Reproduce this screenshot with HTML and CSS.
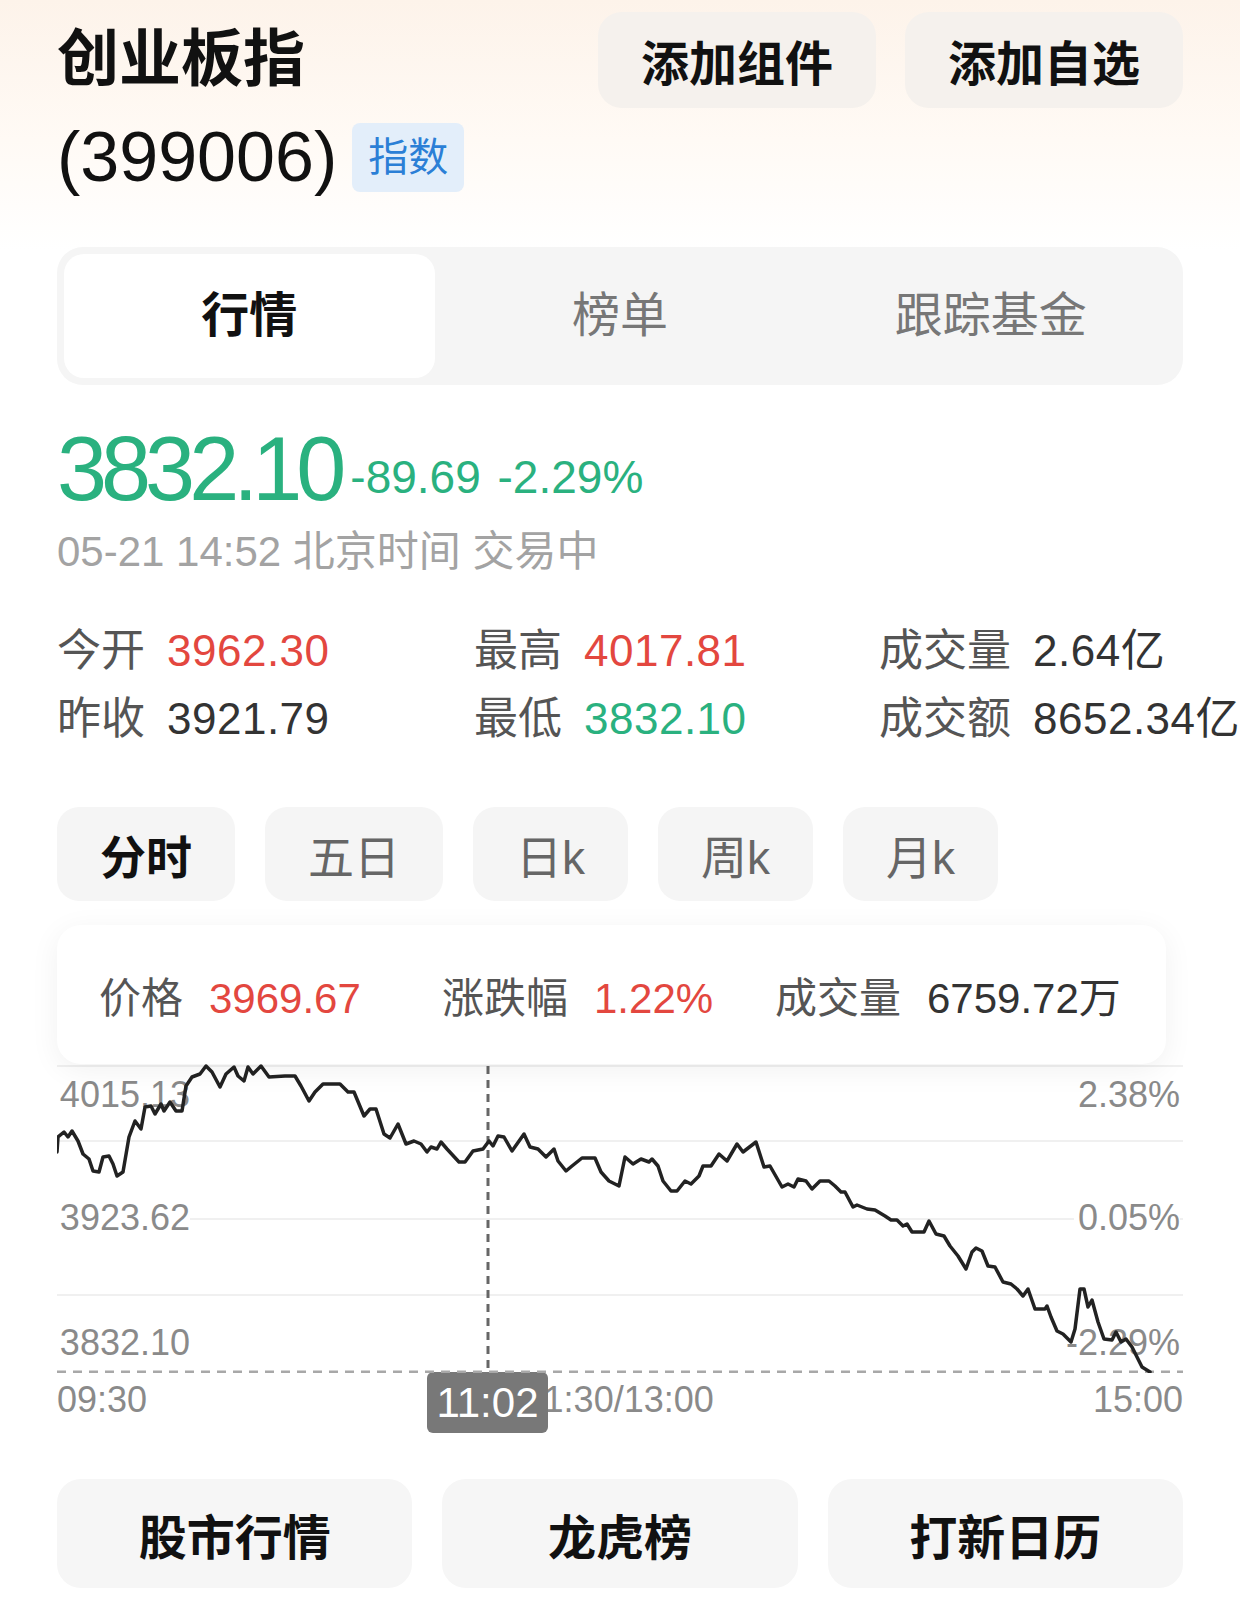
FILE: index.html
```html
<!DOCTYPE html>
<html lang="zh-CN">
<head>
    <meta charset="UTF-8">
    <meta name="viewport" content="width=device-width, initial-scale=1.0">
    <title>创业板指 - 行情</title>
    <link rel="stylesheet" href="styles.css">
</head>
<body>
    <div class="page">
        <header class="top">
            <div class="title-block">
                <h1 class="name">创业板指</h1>
                <div class="code-row">
                    <span class="code">(399006)</span>
                    <span class="tag">指数</span>
                </div>
            </div>
            <div class="top-actions">
                <button class="action-btn">添加组件</button>
                <button class="action-btn">添加自选</button>
            </div>
        </header>

        <nav class="tabs">
            <div class="tab active">行情</div>
            <div class="tab">榜单</div>
            <div class="tab">跟踪基金</div>
        </nav>

        <section class="quote">
            <div class="price-row">
                <span class="last">3832.10</span>
                <span class="change">-89.69 -2.29%</span>
            </div>
            <div class="time">05-21 14:52 北京时间 交易中</div>
        </section>

        <section class="stats">
            <div class="stat"><span class="label">今开</span><span class="up">3962.30</span></div>
            <div class="stat"><span class="label">最高</span><span class="up">4017.81</span></div>
            <div class="stat"><span class="label">成交量</span><span class="plain">2.64亿</span></div>
            <div class="stat"><span class="label">昨收</span><span class="plain">3921.79</span></div>
            <div class="stat"><span class="label">最低</span><span class="down">3832.10</span></div>
            <div class="stat"><span class="label">成交额</span><span class="plain">8652.34亿</span></div>
        </section>

        <div class="periods">
            <div class="period wide active">分时</div>
            <div class="period wide">五日</div>
            <div class="period">日k</div>
            <div class="period">周k</div>
            <div class="period">月k</div>
        </div>

        <div class="info-card">
            <div class="info"><span class="label">价格</span><span class="up">3969.67</span></div>
            <div class="info"><span class="label">涨跌幅</span><span class="up">1.22%</span></div>
            <div class="info"><span class="label">成交量</span><span class="plain">6759.72万</span></div>
        </div>

        <div class="chart">
            <span class="axis-l top-l">4015.13</span>
            <span class="axis-l mid-l">3923.62</span>
            <span class="axis-l bot-l">3832.10</span>
            <span class="axis-r top-l">2.38%</span>
            <span class="axis-r mid-l">0.05%</span>
            <span class="axis-r bot-l">-2.29%</span>
            <svg class="chart-svg" width="1126" height="310" viewBox="0 0 1126 310">
                <line x1="0" y1="309" x2="1126" y2="309" class="base"/>
                <line x1="431" y1="3" x2="431" y2="309" class="cursor"/>
                <polyline class="price-line" points="0,89 1,74 7,69 11,74 15,68 21,78 26,91 32,96 36,108 42,109 46,94 52,93 56,101 60,113 66,109 72,74 78,58 84,66 88,44 94,43 98,51 104,41 107,48 113,39 119,48 125,48 129,23 135,14 143,11 149,3 155,9 163,24 169,11 177,4 181,13 187,18 191,4 196,11 204,3 212,14 228,13 238,13 244,23 252,38 258,29 266,21 283,21 291,29 297,29 307,53 313,46 319,46 327,71 333,75 341,61 349,81 357,78 364,81 370,89 374,84 380,86 384,79 390,86 402,99 408,99 416,88 426,86 432,78 436,83 441,73 447,74 455,88 467,71 473,84 481,86 489,94 497,86 501,98 509,108 515,103 525,95 538,95 544,109 552,118 562,123 568,94 576,101 584,96 592,99 595,96 601,103 606,118 614,128 620,128 628,118 634,121 642,113 646,103 654,103 662,91 670,98 680,81 686,89 699,79 707,104 713,103 725,124 731,121 737,124 741,116 749,118 755,126 763,118 772,118 778,123 784,129 788,129 796,144 800,142 810,146 818,147 828,153 834,157 840,157 846,163 850,161 855,169 863,169 867,169 872,158 879,171 887,173 893,183 901,193 909,206 915,189 919,185 925,188 931,203 938,204 946,219 954,221 960,226 966,233 971,226 978,246 988,246 990,243 994,254 1000,268 1006,271 1014,279 1018,266 1023,226 1027,226 1031,244 1035,237 1041,259 1047,276 1055,277 1059,269 1064,279 1069,276 1075,284 1085,304 1093,309"/>
            </svg>
        </div>

        <div class="xaxis">
            <span>09:30</span>
            <span>11:30/13:00</span>
            <span>15:00</span>
            <span class="cursor-time">11:02</span>
        </div>

        <div class="shortcuts">
            <div class="shortcut">股市行情</div>
            <div class="shortcut">龙虎榜</div>
            <div class="shortcut">打新日历</div>
        </div>
    </div>
</body>
</html>
```

FILE: styles.css
```css
body {
    margin: 0;
    width: 1240px;
    min-height: 1614px;
    overflow: hidden;
    font-family: "Liberation Sans", "Noto Sans CJK SC", sans-serif;
    color: #111;
    background: linear-gradient(180deg, #fdf3ea 0, #fffaf5 140px, #fff 250px) no-repeat;
    background-color: #fff;
}

.page {
    padding: 12px 57px 0;
}

/* header */
.top {
    display: flex;
    justify-content: space-between;
    align-items: flex-start;
}

.name {
    margin: 0;
    font-size: 62px;
    font-weight: 700;
    line-height: 96px;
}

.code-row {
    display: flex;
    align-items: center;
    gap: 15px;
    margin-top: 15px;
    height: 69px;
}

.code {
    font-size: 70px;
    line-height: 69px;
}

.tag {
    font-size: 40px;
    line-height: 69px;
    padding: 0 16px;
    border-radius: 8px;
    color: #2b7fd6;
    background: #e3eefa;
}

.top-actions {
    display: flex;
    gap: 29px;
}

.action-btn {
    width: 278px;
    height: 96px;
    border: none;
    border-radius: 24px;
    background: #f5f1ed;
    font-family: inherit;
    font-size: 48px;
    font-weight: 700;
    color: #111;
}

/* tabs */
.tabs {
    display: grid;
    grid-template-columns: repeat(3, 1fr);
    margin-top: 55px;
    padding: 7px;
    border-radius: 26px;
    background: #f5f5f5;
}

.tab {
    height: 124px;
    line-height: 124px;
    text-align: center;
    font-size: 48px;
    color: #777;
}

.tab.active {
    background: #fff;
    border-radius: 20px;
    color: #111;
    font-weight: 700;
}

/* quote */
.price-row {
    display: flex;
    align-items: center;
    gap: 10px;
    margin-top: 39px;
    color: #2ab17f;
}

.last {
    font-size: 90px;
    line-height: 90px;
    letter-spacing: -6px;
}

.change {
    font-size: 46px;
    line-height: 46px;
    margin-top: 16px;
    word-spacing: 4px;
}

.time {
    margin-top: 10px;
    font-size: 42px;
    line-height: 56px;
    color: #a3a3a3;
}

/* stats */
.stats {
    display: grid;
    grid-template-columns: 417px 405px 1fr;
    margin-top: 37px;
    font-size: 44px;
    line-height: 68px;
}

.stat, .info {
    display: flex;
    align-items: baseline;
    gap: 22px;
    white-space: nowrap;
}

.stat .up, .stat .down, .stat .plain {
    letter-spacing: 0.5px;
}

.label {
    color: #555;
}

.up {
    color: #e3473f;
}

.down {
    color: #2ab17f;
}

.plain {
    color: #333;
}

/* periods */
.periods {
    display: flex;
    gap: 30px;
    margin-top: 54px;
}

.period {
    width: 155px;
    height: 94px;
    display: flex;
    align-items: center;
    justify-content: center;
    border-radius: 22px;
    background: #f5f5f5;
    font-size: 46px;
    color: #666;
}

.period.wide {
    width: 178px;
}

.period.active {
    color: #111;
    font-weight: 700;
}

/* info card */
.info-card {
    display: grid;
    grid-template-columns: 343px 333px 1fr;
    align-items: center;
    height: 139px;
    margin-top: 24px;
    padding: 0 42px;
    width: 1025px;
    border-radius: 24px;
    background: #fff;
    box-shadow: 0 6px 30px rgba(0, 0, 0, 0.06);
    font-size: 42px;
    position: relative;
    z-index: 2;
}

.info {
    gap: 26px;
}

/* chart */
.chart {
    position: relative;
    height: 310px;
    margin-top: -1px;
    background-image:
        linear-gradient(#f0f0f0, #f0f0f0),
        linear-gradient(#f0f0f0, #f0f0f0),
        linear-gradient(#f0f0f0, #f0f0f0),
        linear-gradient(#f0f0f0, #f0f0f0);
    background-size: 100% 2px;
    background-repeat: no-repeat;
    background-position: 0 2px, 0 77px, 0 155px, 0 231px;
}

.chart-svg {
    display: block;
    position: relative;
    z-index: 1;
}

.base {
    stroke: #a8a8a8;
    stroke-width: 3;
    stroke-dasharray: 9 7;
}

.cursor {
    stroke: #666;
    stroke-width: 3;
    stroke-dasharray: 8 6;
}

.price-line {
    fill: none;
    stroke: #222;
    stroke-width: 3.5;
    stroke-linejoin: round;
    stroke-linecap: round;
}

.axis-l, .axis-r {
    position: absolute;
    font-size: 36px;
    line-height: 40px;
    color: #8a8a8a;
    background: #fff;
}

.axis-l {
    right: 993px;
    padding-left: 4px;
}

.axis-r {
    right: 3px;
    padding-left: 4px;
}

.top-l {
    top: 12px;
}

.mid-l {
    top: 135px;
}

.bot-l {
    top: 260px;
}

.xaxis {
    position: relative;
    display: flex;
    justify-content: space-between;
    height: 54px;
    font-size: 36px;
    line-height: 54px;
    color: #8a8a8a;
}

.cursor-time {
    position: absolute;
    left: 370px;
    top: -1px;
    width: 121px;
    height: 61px;
    line-height: 61px;
    text-align: center;
    font-size: 42px;
    color: #fff;
    background: #787878;
    border-radius: 6px;
}

/* shortcuts */
.shortcuts {
    display: grid;
    grid-template-columns: repeat(3, 1fr);
    gap: 30px;
    margin-top: 52px;
}

.shortcut {
    height: 109px;
    display: flex;
    align-items: center;
    justify-content: center;
    border-radius: 24px;
    background: #f6f6f6;
    font-size: 48px;
    font-weight: 700;
}
```
